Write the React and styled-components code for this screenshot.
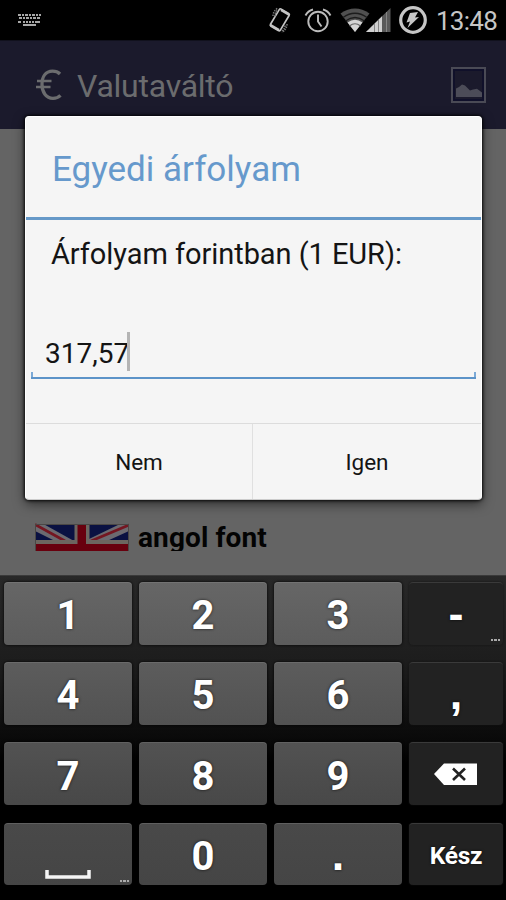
import React, { useState } from "react";
import styled, { createGlobalStyle, css } from "styled-components";

const GlobalStyle = createGlobalStyle`
  * {
    box-sizing: border-box;
  }
  body {
    margin: 0;
    background: #000;
    font-family: Roboto, "Liberation Sans", sans-serif;
  }
`;

const Screen = styled.div`
  position: relative;
  display: flex;
  flex-direction: column;
  width: 506px;
  height: 900px;
  overflow: hidden;
  background: #000;
`;

const StatusBar = styled.header`
  display: flex;
  align-items: center;
  height: 40px;
  padding: 0 9px 0 17px;
  background: #000;
`;

const StatusIcons = styled.div`
  display: flex;
  align-items: center;
  gap: ${props => props.$gap || "0"};
  margin-left: ${props => props.$left};
`;

const Clock = styled.span`
  width: 61px;
  margin-left: 8px;
  font-size: 26px;
  line-height: 40px;
  letter-spacing: -0.75px;
  white-space: nowrap;
  color: #c6c6c6;
  padding-top: 2px;
`;

const ActionBar = styled.div`
  display: flex;
  align-items: center;
  height: 89px;
  padding: 0 20px 0 35px;
  background: #1b1a2c;
  border-top: 1px solid #11111d;
  color: #6b6c6e;
`;

const ActionTitle = styled.h1`
  margin: 0 auto 0 15px;
  padding-top: 1px;
  font-size: 32px;
  font-weight: 400;
  line-height: 40px;
  letter-spacing: -0.25px;
`;

const Content = styled.main`
  display: flex;
  flex-direction: column;
  justify-content: flex-end;
  height: 446px;
  padding: 0 35px 24px;
  background: #646464;
`;

const CurrencyRow = styled.div`
  display: flex;
  align-items: flex-start;
  gap: 9px;
  height: 28px;
  overflow: hidden;
`;

const CurrencyName = styled.span`
  font-size: 28px;
  font-weight: 700;
  line-height: 30px;
  letter-spacing: 0.1px;
  color: #030303;
`;

const Dialog = styled.section`
  position: absolute;
  top: 116px;
  left: 25px;
  display: flex;
  flex-direction: column;
  width: 457px;
  height: 384px;
  border-radius: 4px;
  background: #f5f5f5;
  border: 1px solid #fff;
  border-bottom-color: #ccc;
  box-shadow: 0 0 3px 1px rgba(0, 0, 0, 0.85), 0 4px 12px rgba(0, 0, 0, 0.55);
`;

const DialogTitle = styled.h2`
  height: 103px;
  margin: 0;
  padding: 32px 26px 0;
  font-size: 35px;
  font-weight: 400;
  line-height: 42px;
  color: #6699cc;
  border-bottom: 3px solid #6699c8;
`;

const DialogBody = styled.div`
  flex: 1;
  padding: 17px 5px 0;
`;

const Message = styled.label`
  display: block;
  padding-left: 20px;
  font-size: 29px;
  line-height: 34px;
  letter-spacing: -0.06px;
  color: #141414;
`;

const Field = styled.div`
  display: flex;
  align-items: center;
  height: 47px;
  margin-top: 61px;
  padding: 0 0 5px 14px;
  border-bottom: 2px solid #5c93c8;
  position: relative;

  &::before,
  &::after {
    content: "";
    position: absolute;
    bottom: 0;
    width: 2px;
    height: 5px;
    background: #7ba9d6;
  }
  &::before {
    left: 0;
  }
  &::after {
    right: 0;
  }
`;

const Value = styled.span`
  padding-top: 3px;
  font-size: 28px;
  line-height: 36px;
  color: #141414;
`;

const Caret = styled.i`
  width: 3px;
  height: 39px;
  margin: -1px 0 0 -2px;
  background: #b4b4b4;
`;

const Actions = styled.div`
  display: grid;
  grid-template-columns: 226px 1fr;
  height: 76px;
  border-top: 1px solid #dcdcdc;
`;

const ActionButton = styled.button`
  padding: 1px 0 0;
  border: 0;
  background: none;
  font-family: inherit;
  font-size: 22.5px;
  color: #141414;

  & + & {
    border-left: 1px solid #e0e0e0;
  }
`;

const Keyboard = styled.div`
  display: grid;
  grid-template-columns: 128px 128px 128px 94px;
  grid-template-rows: repeat(4, 62.5px);
  column-gap: 7px;
  row-gap: 17.7px;
  height: 325px;
  padding: 6px 3px 0 4px;
  border-top: 1px solid #3a3a3a;
  background: linear-gradient(#282828, #1d1d1d 26%, #0a0a0a 50%, #000 58%);
`;

const keyShades = [
  ["#666", "#5c5c5c"],
  ["#5c5c5c", "#525252"],
  ["#525252", "#484848"],
  ["#494949", "#454545"]
];

const Key = styled.button`
  position: relative;
  display: flex;
  align-items: center;
  justify-content: center;
  padding: 5px 0 0;
  border: 0;
  border-radius: 4px;
  border-top: 1px solid rgba(255, 255, 255, 0.14);
  background: linear-gradient(
    ${props => keyShades[props.$row][0]},
    ${props => keyShades[props.$row][1]}
  );
  box-shadow: 0 0 3px #000;
  font-family: inherit;
  font-size: 40px;
  font-weight: 700;
  line-height: 46px;
  color: #fff;
  text-shadow: 0 0 3px rgba(0, 0, 0, 0.8);

  ${props =>
    props.$dark &&
    css`
      padding-top: 3px;
      background: #222;
      border-top: 1px solid #3a3a3a;
      box-shadow: 0 0 2px #111;
    `}
  ${props =>
    props.$small &&
    css`
      font-size: 24.5px;
      letter-spacing: -0.2px;
    `}
  ${props =>
    props.$mark &&
    css`
      padding-top: 1px;
      font-family: "Liberation Sans", Arial, sans-serif;
      font-size: 45px;
    `}
`;

const More = styled.span`
  position: absolute;
  right: 3px;
  bottom: ${props => props.$bottom};
  display: flex;
  gap: 1px;

  i {
    width: 2.5px;
    height: 2px;
    background: #aaa;
  }
`;

const KeyboardIcon = () => (
  <svg width="25" height="14" viewBox="0 0 25 14" fill="#a8a8a8">
    <path d="M1 1h3v2H1zM5 1h2v2H5zM8 1h3v2H8zM12 1h2v2h-2zM15 1h3v2h-3zM19 1h2v2h-2zM22 1h2v2h-2z" />
    <path d="M2 4h3v2H2zM6 4h2v2H6zM9 4h3v2H9zM13 4h2v2h-2zM16 4h3v2h-3zM20 4h3v2h-3z" />
    <path d="M1 8h3v2H1zM6 8h2v2H6zM9 8h2v2H9zM12 8h2v2h-2zM15 8h2v2h-2zM18 8h5v2h-5zM6 11h13v2H6z" />
  </svg>
);

const RotateIcon = () => (
  <svg width="24" height="28" viewBox="0 0 24 28" fill="none">
    <rect
      x="6"
      y="4"
      width="11.500"
      height="20"
      rx="1.500"
      transform="rotate(31 12 14)"
      stroke="#c4c4c4"
      strokeWidth="1.700"
    />
    <path d="M2.500 19l8.500 5M13 4l8.500 5" stroke="#c4c4c4" strokeWidth="2.500" />
    <path
      d="M5 10c0-3 1.500-6 5-8M7 10.500c0-3 1-5 3-6.500M19 18c0 4-2 6-5 8.500M17 19.500c0 3-1.500 4.500-3.500 5.500"
      stroke="#777"
      strokeWidth="1.500"
      strokeDasharray="1.500 1"
    />
  </svg>
);

const AlarmIcon = () => (
  <svg
    width="28"
    height="28"
    viewBox="0 0 28 28"
    fill="none"
    stroke="#bcbcbc"
    strokeWidth="1.900"
  >
    <circle cx="14" cy="15.500" r="9.700" />
    <path d="M14 8.500v7l3.500 5" />
    <path d="M1.500 9.500C3 6.500 5.500 4.300 9 3.500M26.500 9.500C25 6.500 22.500 4.300 19 3.500" />
  </svg>
);

const WifiIcon = () => (
  <svg width="30" height="26" viewBox="0 0 30 26" fill="none">
    <path d="M0.500 6.500Q15 -3.500 29.500 6.500L15 25z" fill="#505050" />
    <path d="M3 10.500Q15 2 27 10.500M5.500 14Q15 7 24.500 14" stroke="#1c1c1c" strokeWidth="1.300" />
    <path d="M7.500 15.500Q15 10 22.500 15.500L15 25z" fill="#d4d4d4" />
    <path d="M9.500 19Q15 14.500 20.500 19" stroke="#666" strokeWidth="1.200" />
  </svg>
);

const SignalGlyph = styled.svg`
  margin-left: -4px;
`;

const SignalIcon = () => (
  <SignalGlyph width="25" height="26" viewBox="0 0 25 26">
    <path d="M0 25L24.500 1v24z" fill="#595959" />
    <path d="M0 25L16 9.300V25z" fill="#d0d0d0" />
    <path d="M8.500 17v8M12.500 13v12M20.500 5v20" stroke="#858585" strokeWidth="1" />
  </SignalGlyph>
);

const BatteryIcon = () => (
  <svg width="30" height="30" viewBox="0 0 30 30">
    <circle cx="15" cy="15" r="12.300" fill="none" stroke="#c6c6c6" strokeWidth="3.200" />
    <path d="M12 8l8-1-3 5.500 4-.500L9.500 23l2.500-6.500-3.500 1z" fill="#c6c6c6" />
  </svg>
);

const EuroIcon = () => (
  <svg
    width="27"
    height="32"
    viewBox="0 0 27 32"
    fill="none"
    stroke="currentColor"
    strokeWidth="3.300"
  >
    <path d="M25 5C23 3 20.500 2.200 17.500 2.200C10.500 2.200 7 8 7 15.500S11 29.300 18 29.300c3 0 5.500-1 7.500-3" />
    <path d="M2 12h14.500M1 18h14.500" strokeWidth="2.600" />
  </svg>
);

const PictureIcon = () => (
  <svg width="35" height="36" viewBox="0 0 35 36">
    <rect x="1" y="1" width="33" height="34" fill="none" stroke="#4a4a55" strokeWidth="2" />
    <rect x="3" y="3" width="29" height="30" fill="none" stroke="#10102a" strokeWidth="2" />
    <path
      d="M5 30V21.500l3-1.500 3-2.500 3 1 5 5 3-1 4-.800 5 3.800V30z"
      fill="#4c4c58"
    />
  </svg>
);

const FlagIcon = () => (
  <svg width="94" height="28" viewBox="0 0 94 28">
    <path d="M0 1h94v27H0z" fill="#0a1142" />
    <path d="M0 1h8.500L39 18H20L0 8zM94 1H85L54 16v2h18L94 8z" fill="#6c6a70" />
    <path d="M0 1.500L30 18M94 2L56 18" stroke="#741621" strokeWidth="2.800" />
    <path d="M39.500 1h15v27h-15zM0 17h94v11H0z" fill="#6c6660" />
    <path d="M42.500 1h8.500v27h-8.500zM0 21h94v7H0z" fill="#68000e" />
    <path d="M.500 28V1.500h93V28" fill="none" stroke="#4a4745" />
  </svg>
);

const SpaceGlyph = styled.svg`
  margin-top: 36px;
`;

const SpaceIcon = () => (
  <SpaceGlyph width="48" height="10" viewBox="0 0 48 10">
    <path d="M3 0v7h42V0" fill="none" stroke="#f5f5f5" strokeWidth="3.500" />
  </SpaceGlyph>
);

const BackspaceIcon = () => (
  <svg width="44" height="28" viewBox="0 0 44 28">
    <path d="M0 12L10 1.500h33v21.500H10z" fill="#fff" />
    <path d="M19 6.500l12 11.500M31 6.500L19 18" stroke="#222" strokeWidth="2.600" />
  </svg>
);

const keys = [
  [
    { label: "1" },
    { label: "2" },
    { label: "3" },
    { label: "-", dark: true, mark: true, more: "4px" }
  ],
  [{ label: "4" }, { label: "5" }, { label: "6" }, { label: ",", dark: true, mark: true }],
  [
    { label: "7" },
    { label: "8" },
    { label: "9" },
    { label: "del", icon: <BackspaceIcon />, dark: true }
  ],
  [
    { label: " ", icon: <SpaceIcon />, more: "3px" },
    { label: "0" },
    { label: ".", mark: true },
    { label: "Kész", dark: true, small: true }
  ]
];

function App() {
  const [value, setValue] = useState("317,57");

  const handleKey = label => {
    if (label === "del") {
      setValue(value.slice(0, -1));
    } else if (label !== "Kész") {
      setValue(value + label);
    }
  };

  return (
    <>
      <GlobalStyle />
      <Screen>
        <StatusBar>
          <KeyboardIcon />
          <StatusIcons $gap="12px" $left="auto">
            <RotateIcon />
            <AlarmIcon />
          </StatusIcons>
          <StatusIcons $left="8px">
            <WifiIcon />
            <SignalIcon />
          </StatusIcons>
          <StatusIcons $left="7px">
            <BatteryIcon />
          </StatusIcons>
          <Clock>13:48</Clock>
        </StatusBar>
        <ActionBar>
          <EuroIcon />
          <ActionTitle>Valutaváltó</ActionTitle>
          <PictureIcon />
        </ActionBar>
        <Content>
          <CurrencyRow>
            <FlagIcon />
            <CurrencyName>angol font</CurrencyName>
          </CurrencyRow>
        </Content>
        <Keyboard>
          {keys.map((row, i) =>
            row.map(key => (
              <Key
                key={key.label}
                $row={i}
                $dark={key.dark}
                $small={key.small}
                $mark={key.mark}
                onClick={() => handleKey(key.label)}
              >
                {key.icon || key.label}
                {key.more && (
                  <More $bottom={key.more}>
                    <i />
                    <i />
                    <i />
                  </More>
                )}
              </Key>
            ))
          )}
        </Keyboard>
        <Dialog>
          <DialogTitle>Egyedi árfolyam</DialogTitle>
          <DialogBody>
            <Message>Árfolyam forintban (1 EUR):</Message>
            <Field>
              <Value>{value}</Value>
              <Caret />
            </Field>
          </DialogBody>
          <Actions>
            <ActionButton>Nem</ActionButton>
            <ActionButton>Igen</ActionButton>
          </Actions>
        </Dialog>
      </Screen>
    </>
  );
}

export default App;
